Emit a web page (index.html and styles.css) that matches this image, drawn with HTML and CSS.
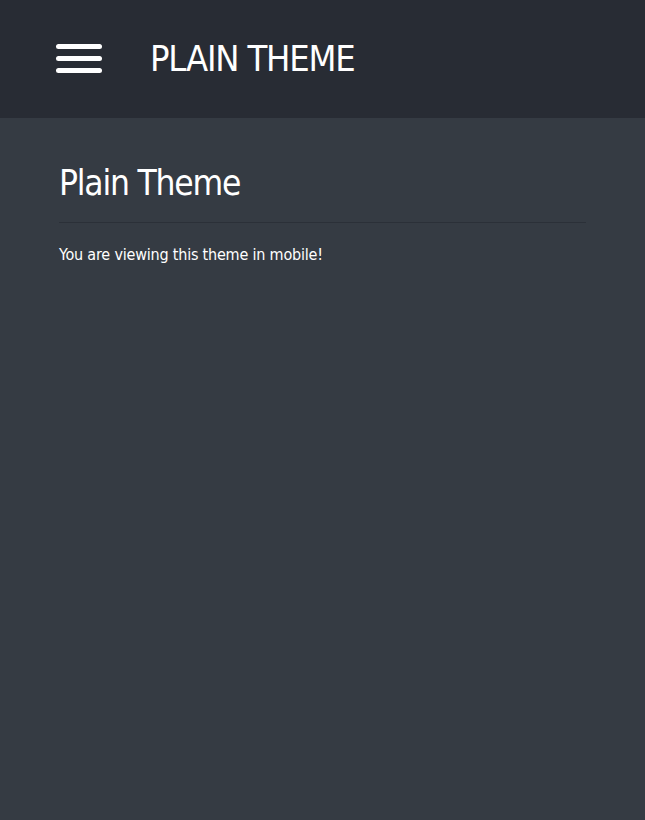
FILE: index.html
```html
<!DOCTYPE html>
<html>
<head>
<meta charset="utf-8">
<link rel="stylesheet" href="styles.css">
</head>
<body>
<header class="topbar">
  <button class="menu" aria-label="Menu">
    <span class="bar"></span><span class="bar"></span><span class="bar"></span>
  </button>
  <div class="brand">PLAIN THEME</div>
</header>
<main class="content">
  <h1 class="title">Plain Theme</h1>
  <hr class="rule">
  <p class="text">You are viewing this theme in mobile!</p>
</main>
</body>
</html>
```
FILE: styles.css
```css
html, body {
  margin: 0;
  padding: 0;
  height: 100%;
}
body {
  background: #353b43;
  color: #ffffff;
  font-family: "Liberation Sans Narrow", "DejaVu Sans Condensed", "Liberation Sans", sans-serif;
}
.topbar {
  height: 118px;
  background: #282c34;
  display: flex;
  align-items: center;
  padding-left: 56px;
  box-sizing: border-box;
}
.menu {
  width: 46px;
  height: 29px;
  padding: 0;
  border: 0;
  background: none;
  display: flex;
  flex-direction: column;
  justify-content: space-between;
  margin-top: -1px;
}
.bar {
  display: block;
  width: 46px;
  height: 5px;
  border-radius: 3px;
  background: #ffffff;
}
.brand {
  margin-left: 48px;
  font-size: 36px;
  line-height: 1;
  letter-spacing: -1.2px;
}
.content {
  padding: 0 59px;
}
.title {
  margin: 0;
  padding-top: 44px;
  font-size: 35px;
  font-weight: normal;
  line-height: 1.2;
  letter-spacing: -1.2px;
}
.rule {
  margin: 18px 0 0 0;
  border: 0;
  border-top: 1px solid #2b3038;
}
.text {
  margin: 22px 0 0 0;
  font-size: 16px;
  line-height: 1.3;
  letter-spacing: -0.2px;
}
```
